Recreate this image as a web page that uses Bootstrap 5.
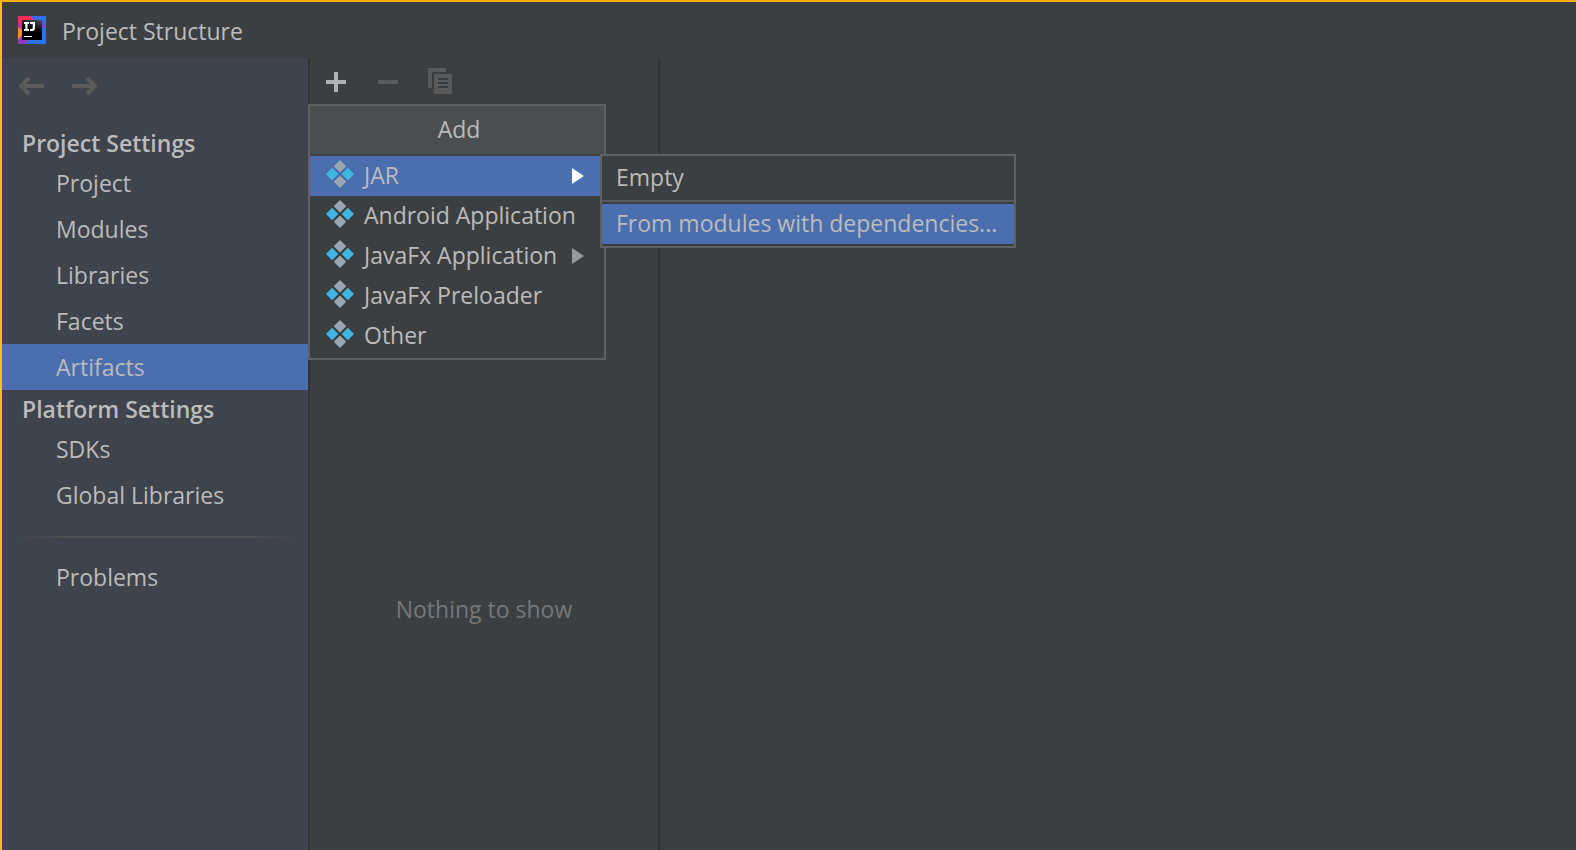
<!DOCTYPE html>
<html lang="en">
<head>
<meta charset="utf-8">
<meta name="viewport" content="width=device-width, initial-scale=1">
<title>Project Structure</title>
<link rel="stylesheet" href="https://cdn.jsdelivr.net/npm/bootstrap@5.3.0/dist/css/bootstrap.min.css">
<style>
  :root { --pane: #3c3f41; --side: #3e434c; --accent: #4b6eaf; --ink: #bbbbbb; --line: #323232; --edge: #616161; --dim: #5a5a5a; }
  body { font-family: "Open Sans", "Noto Sans", sans-serif; font-size: 23px; line-height: 32px; color: var(--ink); background: var(--pane); }
  .window { border-top: 2px solid #f5b200; border-left: 2px solid #ffbc11; }
  .titlebar { height: 56px; padding: 0 16px; }
  .titlebar h1 { font-size: 23px; line-height: 32px; padding-top: 2px; }
  .sidebar { width: 308px; background: var(--side); border-right: 2px solid var(--line); }
  .history { height: 66px; padding: 14px 16px; gap: 26px; }
  .plain { border: 0; padding: 0; background: none; color: inherit; display: flex; }
  .group-title { font-size: 23px; font-weight: 600; line-height: 38px; height: 36px; padding-left: 20px; }
  .side-link { color: inherit; line-height: 46px; height: 46px; padding: 0 0 0 54px; border-radius: 0; }
  .side-link:hover { color: inherit; }
  .side-link.active { background: var(--accent); }
  .fade-rule { height: 2px; margin: 18px 14px 16px 16px; background: linear-gradient(90deg, transparent, #515151 20%, #515151 80%, transparent); }
  .listpane { width: 350px; border-right: 2px solid var(--line); }
  .tools { height: 46px; padding: 8px 14px; gap: 24px; }
  .empty-note { color: #777777; padding-top: 489px; }
  .popup { background: var(--pane); border: 2px solid var(--edge); z-index: 5; }
  .add-menu { left: -2px; top: 46px; width: 298px; }
  .add-menu ul { padding-bottom: 2px; }
  .popup-title { background: #4b4e51; border-bottom: 2px solid #3f4244; line-height: 46px; height: 50px; padding-left: 4px; }
  .item { width: 100%; height: 40px; padding: 0 20px 0 16px; gap: 10px; border: 0; background: none; color: inherit; line-height: 38px; text-align: left; white-space: nowrap; }
  .item span { padding-bottom: 2px; }
  .item.chosen { background: var(--accent); }
  .item .kind { margin-top: -4px; }
  .sub-menu { left: 100%; top: -2px; width: 416px; margin-left: -4px; padding: 2px 0; }
  .sub-menu .item { padding: 0 14px 2px; }
  .sub-menu hr { height: 2px; margin: 2px 0; border: 0; background: #5a5a5a; opacity: 1; }
</style>
</head>
<body>
<svg class="d-none" aria-hidden="true">
  <symbol id="artifact" viewBox="0 0 28 28">
    <path fill="#9aa7b0" d="M14 0l6.2 6.2L14 12.4 7.800 6.200zM14 15.600l6.200 6.200L14 28l-6.200-6.200z"/>
    <path fill="#40b6e0" d="M6.200 7.800l6.200 6.200-6.200 6.200L0 14zM21.800 7.800L28 14l-6.200 6.200-6.200-6.200z"/>
  </symbol>
</svg>
<div class="window min-vh-100 d-flex flex-column">
  <header class="titlebar d-flex align-items-center gap-3">
    <svg width="28" height="28" viewBox="0 0 28 28" aria-hidden="true">
      <path fill="#2874ee" d="M0 0h28v28H0z"/>
      <path fill="#ff2857" d="M0 0h13l3 4-8 12H0z"/>
      <path fill="#3d68e6" d="M13 0h9l2 8-8-3z"/>
      <path fill="#6a4fd0" d="M23 4l5 4v3l-5 2z"/>
      <path fill="#c92f91" d="M0 6l5 2v7L0 13z"/>
      <path fill="#ff8a20" d="M0 11l5 4-1 5-4 4z"/>
      <path fill="#9438c4" d="M0 24l5-6 6 6-4 4H0z"/>
      <defs><linearGradient id="tile" x1="1" y1="0" x2=".7" y2="1"><stop stop-color="#505050"/><stop offset=".6" stop-color="#000"/></linearGradient></defs>
      <path fill="url(#tile)" d="M4 4h20v20H4z"/>
      <path fill="#fff" d="M6 6h5v2H9.500v5H11v2H6v-2h1.300V8H6zM12 6h5v6q0 3-3 3h-2v-2h1.500q1.300 0 1.300-1.300V8H12zM6 20h8v1H6z"/>
    </svg>
    <h1 class="fw-normal m-0">Project Structure</h1>
  </header>
  <div class="d-flex flex-grow-1">
    <nav class="sidebar flex-shrink-0" aria-label="Settings">
      <div class="history d-flex">
        <button class="plain" type="button" disabled aria-label="Back">
          <svg width="28" height="28" viewBox="0 0 28 28" fill="none" stroke="#5a5a5a" stroke-width="4"><path d="M26 14H3M11 6l-8 8 8 8"/></svg>
        </button>
        <button class="plain" type="button" disabled aria-label="Forward">
          <svg width="28" height="28" viewBox="0 0 28 28" fill="none" stroke="#5a5a5a" stroke-width="4"><path d="M0 14h23M15 6l8 8-8 8"/></svg>
        </button>
      </div>
      <h2 class="group-title m-0">Project Settings</h2>
      <div class="nav flex-column">
        <a class="nav-link side-link" href="#project">Project</a>
        <a class="nav-link side-link" href="#modules">Modules</a>
        <a class="nav-link side-link" href="#libraries">Libraries</a>
        <a class="nav-link side-link" href="#facets">Facets</a>
        <a class="nav-link side-link active" href="#artifacts" aria-current="page">Artifacts</a>
      </div>
      <h2 class="group-title m-0">Platform Settings</h2>
      <div class="nav flex-column">
        <a class="nav-link side-link" href="#sdks">SDKs</a>
        <a class="nav-link side-link" href="#global">Global Libraries</a>
      </div>
      <div class="fade-rule"></div>
      <a class="nav-link side-link" href="#problems">Problems</a>
    </nav>
    <section class="listpane flex-shrink-0 position-relative" aria-label="Artifacts">
      <div class="tools d-flex">
        <button class="plain" type="button" aria-label="Add" aria-expanded="true">
          <svg width="28" height="32" viewBox="0 0 28 32"><path fill="#afb1b3" d="M10 6h4v8h8v4h-8v8h-4v-8H2v-4h8z"/></svg>
        </button>
        <button class="plain" type="button" disabled aria-label="Remove">
          <svg width="28" height="32" viewBox="0 0 28 32"><path fill="#5a5a5a" d="M2 14h20v4H2z"/></svg>
        </button>
        <button class="plain" type="button" disabled aria-label="Copy">
          <svg width="28" height="32" viewBox="0 0 28 32"><path fill="#5a5a5a" fill-rule="evenodd" d="M0 2h18v4H4v16H0zM6 8h18v20H6zM10 12v2h10v-2zM10 16v2h10v-2zM10 20v2h10v-2z"/></svg>
        </button>
      </div>
      <div class="add-menu popup position-absolute">
        <div class="popup-title text-center">Add</div>
        <ul class="list-unstyled m-0">
          <li class="position-relative">
            <button class="item chosen d-flex align-items-center" type="button" aria-expanded="true">
              <svg class="kind" width="28" height="28"><use href="#artifact"/></svg><span>JAR</span>
              <svg class="ms-auto" width="12" height="16"><path fill="#fff" d="M0 0l12 8-12 8z"/></svg>
            </button>
            <div class="sub-menu popup position-absolute">
              <button class="item d-block" type="button">Empty</button>
              <hr>
              <button class="item chosen d-block" type="button">From modules with dependencies...</button>
            </div>
          </li>
          <li><button class="item d-flex align-items-center" type="button"><svg class="kind" width="28" height="28"><use href="#artifact"/></svg><span>Android Application</span></button></li>
          <li><button class="item d-flex align-items-center" type="button"><svg class="kind" width="28" height="28"><use href="#artifact"/></svg><span>JavaFx Application</span><svg class="ms-auto" width="12" height="16"><path fill="#999" d="M0 0l12 8-12 8z"/></svg></button></li>
          <li><button class="item d-flex align-items-center" type="button"><svg class="kind" width="28" height="28"><use href="#artifact"/></svg><span>JavaFx Preloader</span></button></li>
          <li><button class="item d-flex align-items-center" type="button"><svg class="kind" width="28" height="28"><use href="#artifact"/></svg><span>Other</span></button></li>
        </ul>
      </div>
      <p class="empty-note text-center m-0">Nothing to show</p>
    </section>
    <main class="flex-grow-1"></main>
  </div>
</div>
<script src="https://cdn.jsdelivr.net/npm/bootstrap@5.3.0/dist/js/bootstrap.bundle.min.js"></script>
</body>
</html>
